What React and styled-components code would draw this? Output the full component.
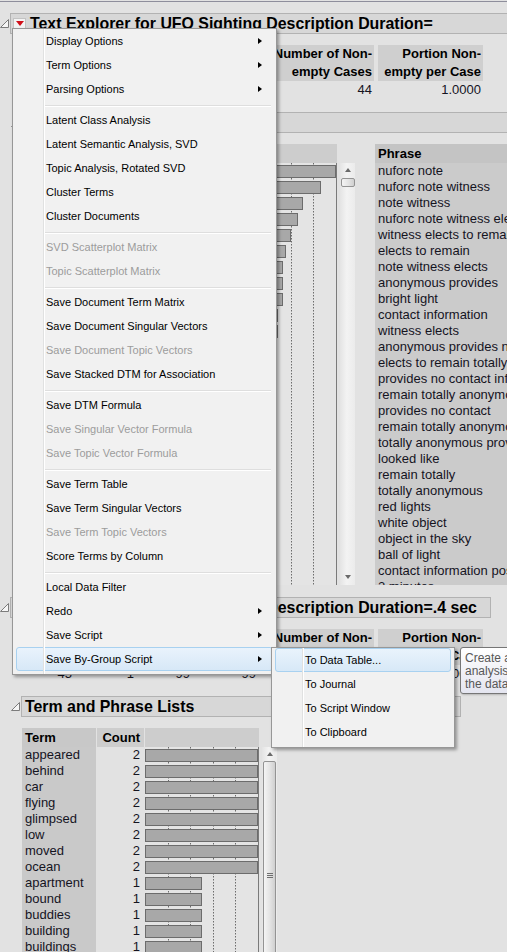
import React from "react";
import styled, { createGlobalStyle, css } from "styled-components";

const GlobalStyle = createGlobalStyle`
  html, body {
    margin: 0;
    padding: 0;
    background: #e2e2e2;
  }
  body {
    font-family: "Liberation Sans", Arial, sans-serif;
    color: #15141f;
  }
`;

const ROW = 16;

const summary1 = {
  heads: [
    ["Total", "Terms"],
    ["Total", "Cases"],
    ["Total", "Tokens"],
    ["Tokens", "per Case"],
    ["Number of Non-", "empty Cases"],
    ["Portion Non-", "empty per Case"],
  ],
  values: ["312", "44", "1523", "34.61", "44", "1.0000"],
};

const summary2 = {
  heads: summary1.heads,
  values: ["45", "1", "99", "99", "1", "1.0000"],
};

const terms1 = [
  ["light", 45], ["nuforc", 39], ["note", 32], ["witness", 30], ["object", 27],
  ["lights", 25], ["sky", 24], ["bright", 24], ["elects", 24], ["remain", 22],
  ["anonymous", 22], ["provides", 20], ["totally", 20], ["contact", 19],
  ["information", 19], ["looked", 18], ["moving", 17], ["red", 17], ["white", 16],
  ["minutes", 15], ["seen", 15], ["ball", 14], ["craft", 14], ["saw", 13],
  ["flying", 13], ["shape", 12], ["north", 12],
];

const terms2 = [
  ["appeared", 2], ["behind", 2], ["car", 2], ["flying", 2], ["glimpsed", 2],
  ["low", 2], ["moved", 2], ["ocean", 2], ["apartment", 1], ["bound", 1],
  ["buddies", 1], ["building", 1], ["buildings", 1], ["bus", 1], ["came", 1],
];

const phrases = [
  "nuforc note", "nuforc note witness", "note witness",
  "nuforc note witness elects", "witness elects to remain", "elects to remain",
  "note witness elects", "anonymous provides", "bright light",
  "contact information", "witness elects", "anonymous provides no",
  "elects to remain totally", "provides no contact information",
  "remain totally anonymous", "provides no contact",
  "remain totally anonymous provides", "totally anonymous provides",
  "looked like", "remain totally", "totally anonymous", "red lights",
  "white object", "object in the sky", "ball of light",
  "contact information possible", "2 minutes",
];

const mainMenu = [
  { label: "Display Options", sub: true },
  { label: "Term Options", sub: true },
  { label: "Parsing Options", sub: true },
  "sep",
  { label: "Latent Class Analysis" },
  { label: "Latent Semantic Analysis, SVD" },
  { label: "Topic Analysis, Rotated SVD" },
  { label: "Cluster Terms" },
  { label: "Cluster Documents" },
  "sep",
  { label: "SVD Scatterplot Matrix", off: true },
  { label: "Topic Scatterplot Matrix", off: true },
  "sep",
  { label: "Save Document Term Matrix" },
  { label: "Save Document Singular Vectors" },
  { label: "Save Document Topic Vectors", off: true },
  { label: "Save Stacked DTM for Association" },
  "sep",
  { label: "Save DTM Formula" },
  { label: "Save Singular Vector Formula", off: true },
  { label: "Save Topic Vector Formula", off: true },
  "sep",
  { label: "Save Term Table" },
  { label: "Save Term Singular Vectors" },
  { label: "Save Term Topic Vectors", off: true },
  { label: "Score Terms by Column" },
  "sep",
  { label: "Local Data Filter" },
  { label: "Redo", sub: true },
  { label: "Save Script", sub: true },
  { label: "Save By-Group Script", sub: true, active: true },
];

const byGroupMenu = [
  { label: "To Data Table...", active: true },
  { label: "To Journal" },
  { label: "To Script Window" },
  { label: "To Clipboard" },
];

const Page = styled.div`
  position: relative;
  width: 507px;
  height: 952px;
  overflow: hidden;
  padding-top: 1px;
  box-sizing: border-box;
  background: #e2e2e2;
`;

const TopRule = styled.div`
  height: 1px;
  background: #8e8e9c;
  margin-bottom: 11px;
`;

const Outline = styled.section`
  display: flex;
  flex-direction: column;
  & + & {
    margin-top: 12px;
  }
`;

const OutlineHead = styled.div`
  display: flex;
  align-items: center;
  margin-left: ${(p) => p.$indent || 0}px;
  margin-top: ${(p) => p.$gap || 0}px;
`;

const Disclosure = styled.span`
  width: 10px;
  height: 21px;
  flex: none;
  display: flex;
  align-items: center;
  justify-content: flex-end;
  padding-right: 1px;
  box-sizing: border-box;
  svg {
    display: block;
  }
`;

const TitleBox = styled.div`
  box-sizing: border-box;
  flex: none;
  width: ${(p) => p.$width}px;
  height: 21px;
  display: flex;
  align-items: center;
  gap: 4px;
  padding-left: ${(p) => (p.$button ? 2 : 3)}px;
  background: #d7d7d7;
  border: 1px solid #b2b2b2;
  font-size: 15.9px;
  font-weight: bold;
  color: #000;
  white-space: nowrap;
`;

const RedButton = styled.span`
  width: 13px;
  height: 11px;
  flex: none;
  box-sizing: border-box;
  display: flex;
  align-items: center;
  justify-content: center;
  background: #f3f3f3;
  border: 1px solid #c3c3c3;
  &::after {
    content: "";
    border-left: 4px solid transparent;
    border-right: 4px solid transparent;
    border-top: 5px solid #d0101a;
  }
`;

const Body = styled.div`
  padding-left: 22px;
  margin-top: ${(p) => p.$gap}px;
`;

const SummaryGrid = styled.div`
  display: grid;
  grid-template-columns: 52px 58px 52px 62px 112px 105px;
  column-gap: 4px;
  font-size: 13px;
`;

const SummaryHead = styled.div`
  height: 36px;
  background: #cfcfcf;
  font-weight: bold;
  color: #000;
  line-height: 18px;
  text-align: right;
  padding-right: 2px;
  white-space: nowrap;
`;

const SummaryValue = styled.div`
  height: 18px;
  line-height: 18px;
  text-align: right;
  padding-right: 2px;
`;

const Lists = styled.div`
  display: flex;
  align-items: flex-start;
  height: ${(p) => p.$height}px;
  overflow: hidden;
  font-size: 13px;
`;

const Column = styled.div`
  width: ${(p) => p.$w}px;
  flex: none;
  margin-left: ${(p) => p.$gap ?? 1}px;
  &:first-child {
    margin-left: 0;
  }
`;

const HeadCell = styled.div`
  height: 19px;
  line-height: 19px;
  background: ${(p) => p.$bg || "#cdcdcd"};
  font-weight: bold;
  color: #000;
  padding: 0 ${(p) => (p.$right ? "4px" : "3px")};
  text-align: ${(p) => (p.$right ? "right" : "left")};
  white-space: nowrap;
`;

const Cell = styled.div`
  height: ${ROW}px;
  line-height: ${ROW}px;
  padding: 0 ${(p) => (p.$right ? "4px" : "3px")};
  text-align: ${(p) => (p.$right ? "right" : "left")};
  background: ${(p) => p.$bg || "transparent"};
  white-space: nowrap;
  overflow: hidden;
`;

const ChartBody = styled.div`
  background: #e4e4e4;
  svg {
    display: block;
  }
`;

const ScrollTrack = styled.div`
  width: 15px;
  height: ${(p) => p.$h}px;
  flex: none;
  margin-top: 19px;
  margin-left: 3px;
  display: flex;
  flex-direction: column;
  align-items: center;
  background: linear-gradient(to right, #e4e4e4, #f3f3f3 45%, #ebebeb);
`;

const Arrow = styled.span`
  flex: none;
  margin-top: ${(p) => (p.$down ? "auto" : "5px")};
  margin-bottom: ${(p) => (p.$down ? "6px" : "0")};
  border-left: 3px solid transparent;
  border-right: 3px solid transparent;
  ${(p) =>
    p.$down
      ? css`border-top: 4px solid #6a6a6a;`
      : css`border-bottom: 4px solid #6a6a6a;`}
`;

const Thumb = styled.div`
  flex: none;
  margin-top: ${(p) => p.$offset}px;
  width: ${(p) => p.$w}px;
  height: ${(p) => p.$h}px;
  box-sizing: border-box;
  border: 1px solid #939393;
  border-radius: 2px;
  background: linear-gradient(to right, #f4f4f4, #e3e3e3 55%, #cfcfcf);
  display: flex;
  flex-direction: column;
  align-items: center;
  justify-content: center;
  gap: 1px;
`;

const Grip = styled.span`
  width: 6px;
  height: 1px;
  background: #6f6f6f;
`;

const MenuBox = styled.div`
  position: absolute;
  left: ${(p) => p.$left}px;
  top: ${(p) => p.$top}px;
  width: ${(p) => p.$width}px;
  z-index: ${(p) => p.$z};
  box-sizing: border-box;
  padding: 0 3px 3px;
  background: #f1f1f1;
  border: 1px solid #979797;
  box-shadow: 2px 2px 3px rgba(0, 0, 0, 0.35);
  font-family: "Liberation Sans", Arial, sans-serif;
  font-size: 11px;
  &::before {
    content: "";
    position: absolute;
    z-index: 1;
    top: 0;
    bottom: 0;
    left: 30px;
    width: 1px;
    background: #e0e1e1;
    border-right: 1px solid #ffffff;
  }
`;

const MenuItem = styled.div`
  height: 24px;
  box-sizing: border-box;
  display: flex;
  align-items: center;
  padding-left: 29px;
  border: 1px solid transparent;
  border-radius: 3px;
  color: ${(p) => (p.$off ? "#9c9c9c" : "#000")};
  white-space: nowrap;
  ${(p) =>
    p.$active &&
    css`
      background: linear-gradient(#e9f3fc, #d7e8f7);
      border-color: #a8d1f0;
    `}
`;

const SubArrow = styled.span`
  margin-left: auto;
  margin-right: 10px;
  border-left: 4px solid #000;
  border-top: 3.5px solid transparent;
  border-bottom: 3.5px solid transparent;
`;

const Separator = styled.div`
  height: 7px;
  margin: 0 2px 0 29px;
  display: flex;
  align-items: flex-end;
  padding-bottom: 1px;
  box-sizing: border-box;
  &::after {
    content: "";
    flex: 1;
    height: 1px;
    background: #dedede;
    border-bottom: 1px solid #ffffff;
  }
`;

const Tooltip = styled.div`
  position: absolute;
  left: 460px;
  top: 647px;
  z-index: 4;
  width: 130px;
  height: 47px;
  box-sizing: border-box;
  padding: 4px 4px;
  border: 1px solid #767676;
  border-radius: 3px;
  background: linear-gradient(#ffffff, #e4e5f0);
  box-shadow: 1px 1px 2px rgba(0, 0, 0, 0.2);
  font-size: 12px;
  line-height: 13px;
  color: #575757;
  white-space: nowrap;
`;

const Triangle = () => (
  <svg width="9" height="9" viewBox="0 0 9 9">
    <polygon points="0.5,8.5 8.5,0.5 8.5,8.5" fill="#f6f6f6" stroke="#7c7c7c" />
  </svg>
);

const Head = ({ title, width, button, indent, gap }) => (
  <OutlineHead $indent={indent} $gap={gap}>
    <Disclosure>
      <Triangle />
    </Disclosure>
    <TitleBox $width={width} $button={button}>
      {button && <RedButton />}
      {title}
    </TitleBox>
  </OutlineHead>
);

const Summary = ({ data }) => (
  <SummaryGrid>
    {data.heads.map(([a, b]) => (
      <SummaryHead key={a + b}>
        {a}
        <br />
        {b}
      </SummaryHead>
    ))}
    {data.values.map((v, i) => (
      <SummaryValue key={i}>{v}</SummaryValue>
    ))}
  </SummaryGrid>
);

const BarChart = ({ rows, width = 113 }) => {
  const max = Math.max(...rows.map((r) => r[1]));
  const h = rows.length * ROW;
  const grid = [0.2, 0.4, 0.6, 0.8].map((f) => Math.round(width * f) + 0.5);
  return (
    <svg width={width + 1} height={h}>
      {grid.map((x) => (
        <line key={x} x1={x} x2={x} y1={0} y2={h} stroke="#6c6c6c" strokeDasharray="1.5 1.5" />
      ))}
      {rows.map(([t, c], i) => (
        <rect
          key={t}
          x={0.5}
          y={i * ROW + 2.5}
          width={Math.round((width * c) / max) - 1}
          height={12}
          fill="#a8a8a8"
          stroke="#6c6c6c"
        />
      ))}
      <line x1={width + 0.5} x2={width + 0.5} y1={0} y2={h} stroke="#7a7a7a" />
    </svg>
  );
};

const TermTable = ({ rows, termW, trackH, thumb }) => (
  <>
    <Column $w={termW}>
      <HeadCell $bg="#c8c8c8">Term</HeadCell>
      {rows.map(([t]) => (
        <Cell key={t} $bg="#c9c9c9">
          {t}
        </Cell>
      ))}
    </Column>
    <Column $w={47}>
      <HeadCell $right>Count</HeadCell>
      {rows.map(([t, c]) => (
        <Cell key={t} $right>
          {c}
        </Cell>
      ))}
    </Column>
    <Column $w={114}>
      <HeadCell />
      <ChartBody>
        <BarChart rows={rows} />
      </ChartBody>
    </Column>
    <ScrollTrack $h={trackH}>
      <Arrow />
      <Thumb $offset={thumb.offset} $w={thumb.w} $h={thumb.h}>
        {thumb.grip && (
          <>
            <Grip />
            <Grip />
            <Grip />
          </>
        )}
      </Thumb>
      {thumb.down && <Arrow $down />}
    </ScrollTrack>
  </>
);

const Menu = ({ items, left, top, width, z }) => (
  <MenuBox $left={left} $top={top} $width={width} $z={z}>
    {items.map((it, i) =>
      it === "sep" ? (
        <Separator key={i} />
      ) : (
        <MenuItem key={it.label} $off={it.off} $active={it.active}>
          {it.label}
          {it.sub && <SubArrow />}
        </MenuItem>
      )
    )}
  </MenuBox>
);

export default function App() {
  const title = "Text Explorer for UFO Sighting Description Duration=";
  return (
    <Page>
      <GlobalStyle />
      <TopRule />

      <Outline>
        <Head title={title} width={620} button />
        <Body $gap={11}>
          <Summary data={summary1} />
        </Body>
        <Head title="Term and Phrase Lists" width={620} indent={11} gap={13} />
        <Body $gap={11}>
          <Lists $height={441}>
            <TermTable
              rows={terms1}
              termW={152}
              trackH={422}
              thumb={{ offset: 6, w: 14, h: 9, down: true }}
            />
            <Column $w={220} $gap={20}>
              <HeadCell $bg="#c4c4c4">Phrase</HeadCell>
              {phrases.map((p) => (
                <Cell key={p} $bg="#cbcbcb">
                  {p}
                </Cell>
              ))}
            </Column>
          </Lists>
        </Body>
      </Outline>

      <Outline>
        <Head title={title + ".4 sec"} width={481} button />
        <Body $gap={11}>
          <Summary data={summary2} />
        </Body>
        <Head title="Term and Phrase Lists" width={440} indent={11} gap={13} />
        <Body $gap={11}>
          <Lists $height={260}>
            <TermTable
              rows={terms2}
              termW={74}
              trackH={240}
              thumb={{ offset: 5, w: 13, h: 228, grip: true }}
            />
          </Lists>
        </Body>
      </Outline>

      <Menu items={mainMenu} left={12} top={28} width={265} z={2} />
      <Menu items={byGroupMenu} left={271} top={647} width={184} z={3} />
      <Tooltip>
        Create a script that reproduces this
        <br />
        analysis, for each By group, and saves
        <br />
        the data table.
      </Tooltip>
    </Page>
  );
}
